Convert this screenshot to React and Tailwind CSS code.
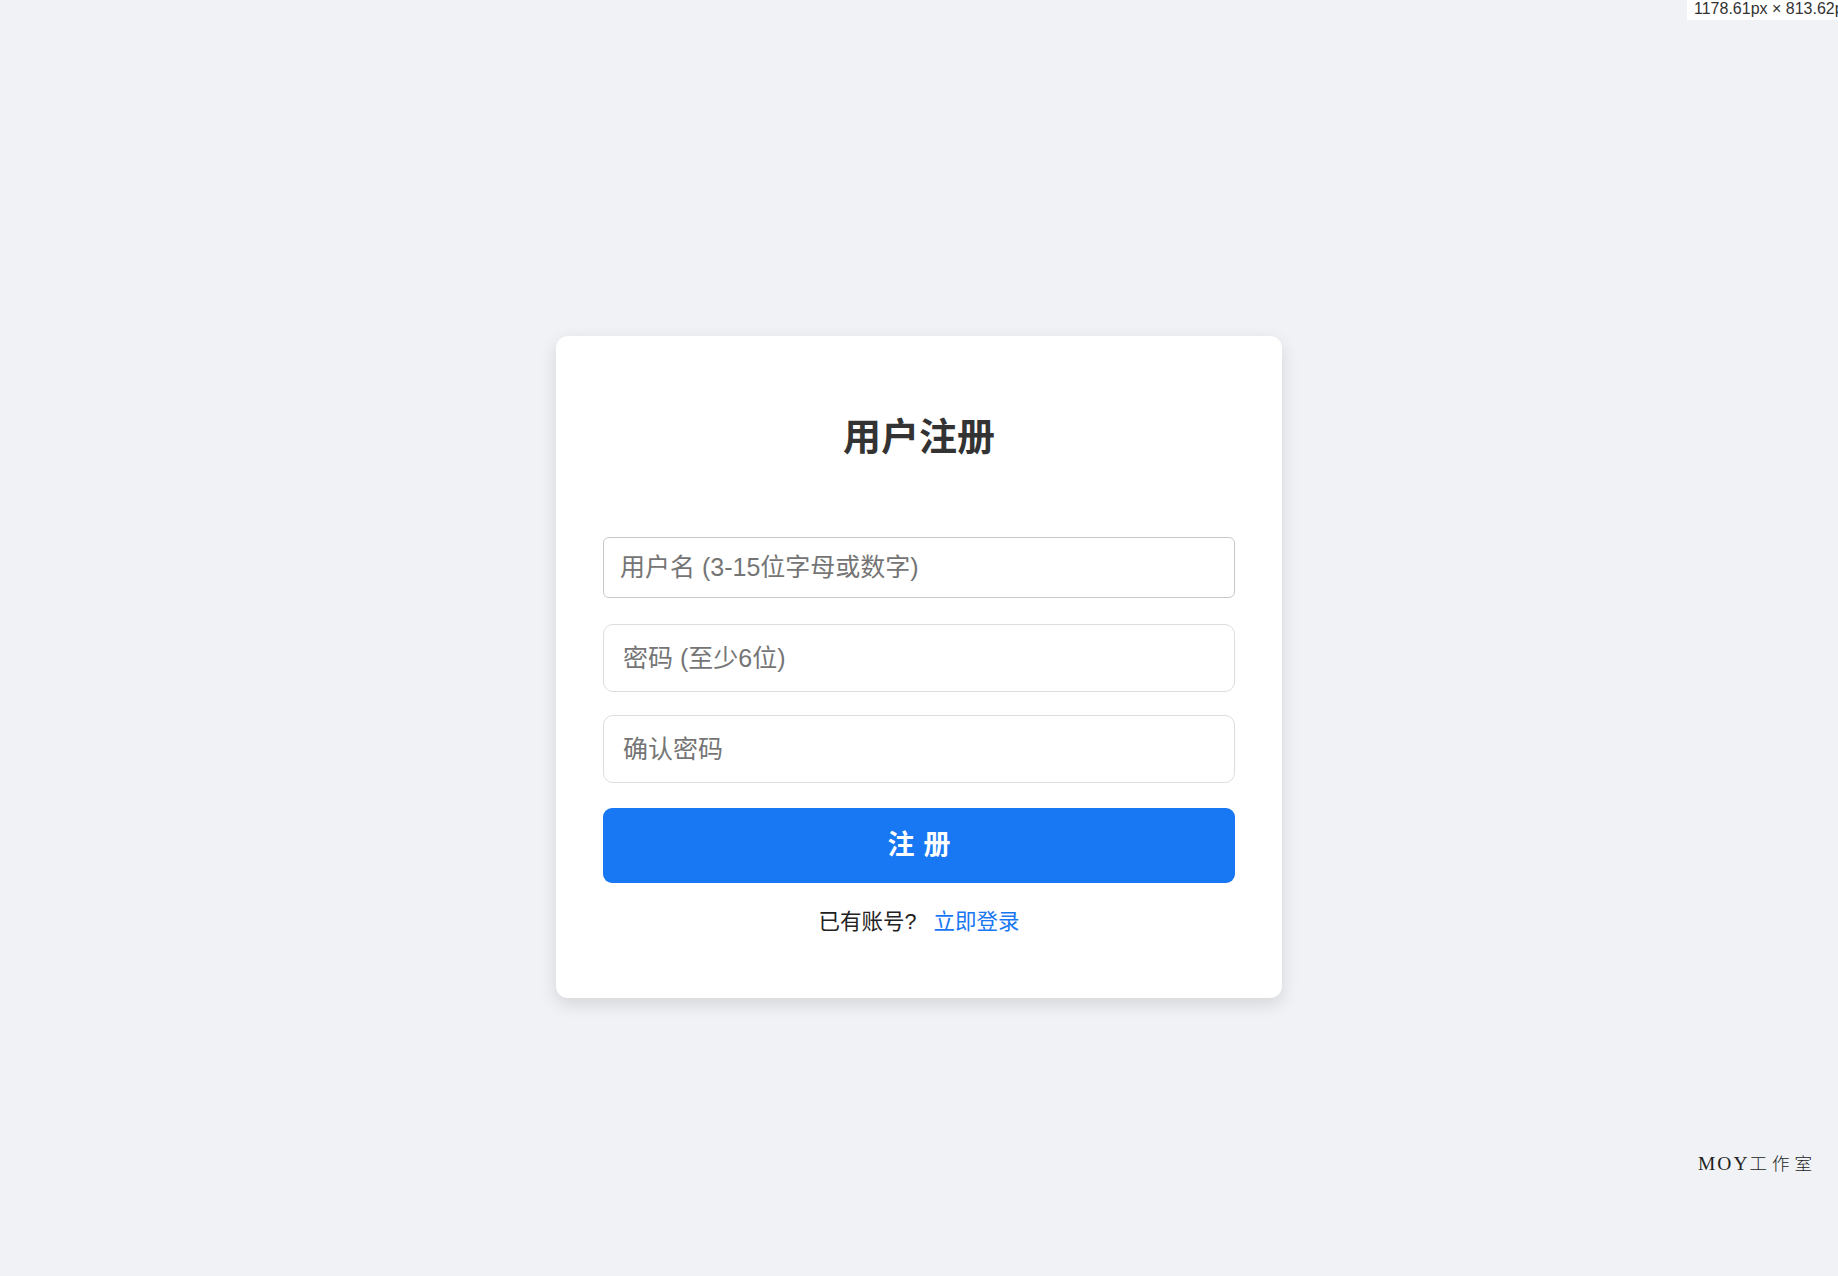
import React from "react";

export default function App() {
  const font = { fontFamily: '"Liberation Sans", "Noto Sans CJK SC", sans-serif' };
  return (
    <div
      className="relative w-full h-[1276px] bg-[#f0f2f5] flex justify-center pt-[336px]"
      style={font}
    >
      <div className="absolute top-0 right-0 w-[151px] h-[20px] bg-white text-[16px] leading-[16px] text-[#333] pl-[7px] pt-[1px] overflow-hidden whitespace-nowrap">
        1178.61px × 813.62px
      </div>

      <div className="w-[726px] h-[662px] bg-white rounded-[12px] shadow-[0_6px_18px_rgba(0,0,0,0.12)] px-[47px] pt-[79px] flex flex-col">
        <h1 className="text-center text-[38px] leading-[44px] font-bold text-[#333]">
          用户注册
        </h1>

        <input
          className="mt-[78px] w-full h-[61px] border border-[#c9c9c9] rounded-[6px] px-[16px] text-[25px] outline-none placeholder:text-[#757575]"
          placeholder="用户名 (3-15位字母或数字)"
        />
        <input
          className="mt-[26px] w-full h-[68px] border border-[#dedede] rounded-[10px] px-[19px] text-[25px] outline-none placeholder:text-[#757575]"
          placeholder="密码 (至少6位)"
        />
        <input
          className="mt-[23px] w-full h-[68px] border border-[#dedede] rounded-[10px] px-[19px] text-[25px] outline-none placeholder:text-[#757575]"
          placeholder="确认密码"
        />
        <button className="mt-[25px] w-full h-[75px] bg-[#1877f2] rounded-[9px] text-white text-[27px] font-bold tracking-[9px] pl-[9px]">
          注册
        </button>

        <div className="mt-[23px] h-[32px] leading-[32px] text-center text-[21.5px] text-[#222]">
          已有账号?<span className="ml-[17px] text-[#1877f2]">立即登录</span>
        </div>
      </div>

      <div
        className="absolute right-[21px] top-[1152px] text-[19.5px] leading-[24px] tracking-[2px] text-[#222]"
        style={{ fontFamily: '"Liberation Serif", "Noto Sans CJK SC", serif' }}
      >
        MOY<span className="font-light text-[17.5px] tracking-[5px]">工作室</span>
      </div>
    </div>
  );
}
